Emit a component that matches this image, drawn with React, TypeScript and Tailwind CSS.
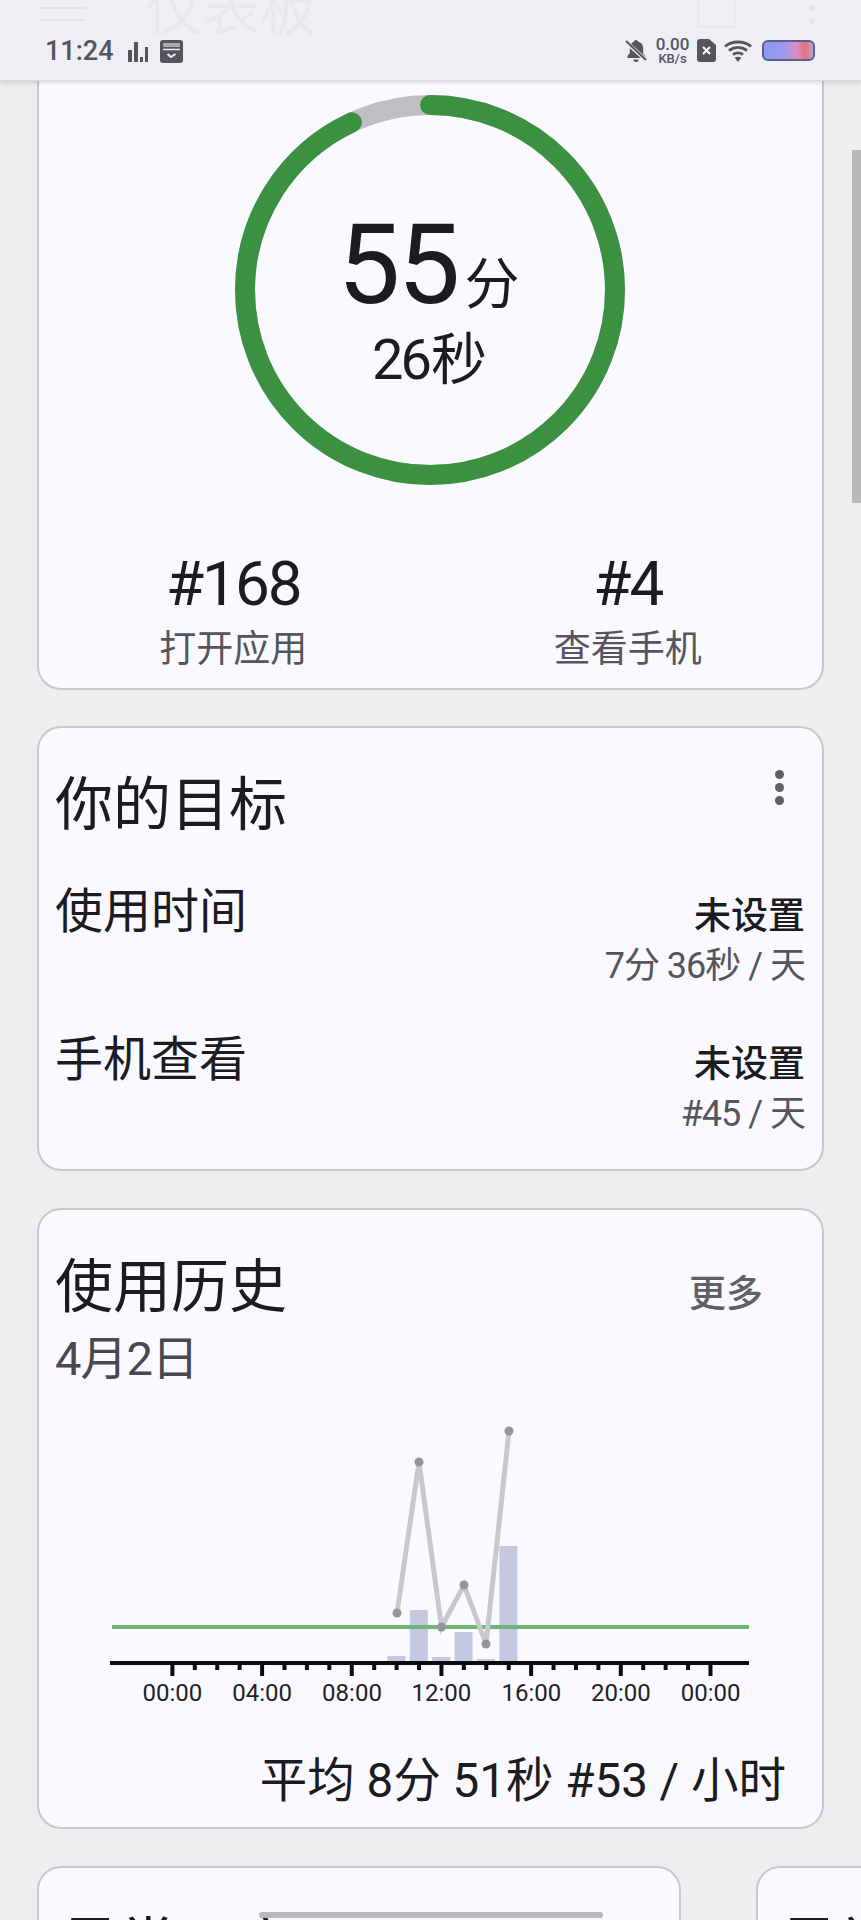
const sans = "font-['Roboto','Noto_Sans_CJK_SC',sans-serif]"

const hours = [172.4, 262.2, 352, 441.4, 531.4, 620.8, 710.6]
const labels = ['00:00', '04:00', '08:00', '12:00', '16:00', '20:00', '00:00']
const bars = [
    { h: 10, top: 1657 },
    { h: 11, top: 1611 },
    { h: 12, top: 1658 },
    { h: 13, top: 1633 },
    { h: 14, top: 1660 },
    { h: 15, top: 1547 },
]
const points = [
    [397, 1614],
    [419, 1463],
    [441.5, 1628],
    [464, 1586],
    [486, 1645],
    [509, 1432],
]

function StatusIcons()
{
    return (
        <div className="flex items-center">
            <svg width="22" height="24" viewBox="0 0 22 24" className="ml-[625px] text-[#55555e]" fill="currentColor">
                <path d="M11 1a2 2 0 0 1 2 1.600c3.400.8 5.200 3.600 5.200 7v5l2.300 3v1.400H2.500V17l2.300-3V9.600c0-3.400 2.200-6.200 4.200-7A2 2 0 0 1 11 1zM8.500 20.500h5a2.500 2.500 0 0 1-5 0z" />
                <path d="M1 3l20 18" stroke="#eeeef4" strokeWidth="4" />
                <path d="M1 2l20 19" stroke="currentColor" strokeWidth="2" />
            </svg>
            <div className={`ml-[7px] flex w-[37px] flex-col items-center font-medium text-[#55555e] ${sans}`}>
                <span className="text-[17px] leading-[16px]">0.00</span>
                <span className="text-[13px] leading-[13px]">KB/s</span>
            </div>
            <svg width="19" height="23" viewBox="0 0 19 23" className="ml-[6px]">
                <path d="M3 0h9l7 6v14a3 3 0 0 1-3 3H3a3 3 0 0 1-3-3V3a3 3 0 0 1 3-3z" fill="#55555e" />
                <path d="M6 8l7 7M13 8l-7 7" stroke="#ffffff" strokeWidth="2" />
            </svg>
            <svg width="28" height="22" viewBox="0 0 28 22" className="ml-[8px]" fill="none" stroke="#55555e" strokeWidth="2.800">
                <path d="M1 6.500C8 .5 20 .5 27 6.500" />
                <path d="M5 10.500c5.500-4 12.500-4 18 0" />
                <path d="M9 14.500c3-2 7-2 10 0" />
                <path d="M14 22l-3.500-4.500c2-1 5-1 7 0z" fill="#55555e" stroke="none" />
            </svg>
            <div className="ml-[10px] h-[21px] w-[53px] overflow-hidden rounded-[6px] border-2 border-[#56608a] bg-[linear-gradient(90deg,#8f97f0_0%,#a097ee_40%,#d68fc4_65%,#e56f7f_85%,#b9a6d8_100%)]" />
        </div>
    )
}

function Header()
{
    return (
        <header className="relative h-[81px] shrink-0 overflow-hidden bg-[#eeeef4] border-b border-[#dcdce0] shadow-[0_2px_4px_rgba(0,0,0,0.12)] z-10">
            <div className="flex h-[36px] items-start text-[#e7e7ed]">
                <div className="ml-[40px] mt-[7px] flex w-[46px] flex-col gap-[10px]">
                    <div className="h-[2px] bg-[#e3e3e9]" />
                    <div className="h-[2px] bg-[#e3e3e9]" />
                </div>
                <div className={`ml-[60px] -mt-[24px] text-[57px] leading-[70px] ${sans}`}>仪表板</div>
                <div className="ml-[380px] -mt-[2px] h-[30px] w-[39px] rounded-[2px] border-2 border-[#e7e7ed]" />
                <div className="ml-[73px] mt-[5px] flex flex-col gap-[7px]">
                    <div className="h-[6px] w-[6px] rounded-full bg-[#e3e3e9]" />
                    <div className="h-[6px] w-[6px] rounded-full bg-[#e3e3e9]" />
                </div>
            </div>
            <div className="flex h-[30px] items-center pl-[45px] text-[#55555e]">
                <span className={`text-[27px] font-medium leading-[30px] ${sans}`}>11:24</span>
                <svg width="21" height="21" viewBox="0 0 21 21" fill="currentColor" className="ml-[14px]">
                    <rect x="0" y="9" width="4" height="12" />
                    <rect x="6" y="1" width="4" height="20" />
                    <rect x="12" y="16" width="3" height="5" />
                    <rect x="17" y="6" width="3" height="15" />
                </svg>
                <svg width="23" height="23" viewBox="0 0 23 23" className="ml-[11px]">
                    <rect width="23" height="23" rx="3" fill="#55555e" />
                    <rect x="3" y="3" width="17" height="4" rx="1" fill="#a9a9b0" />
                    <path d="M3 9.500h17" stroke="#eeeef4" strokeWidth="1.500" />
                    <path d="M7.500 14l3.500 3 4.500-3" stroke="#eeeef4" strokeWidth="2" fill="none" />
                </svg>
                <div className="absolute left-0 top-[36px]">
                    <StatusIcons />
                </div>
            </div>
        </header>
    )
}

function Ring()
{
    return (
        <div className="relative -ml-[2px] mt-[14px] h-[390px] w-[390px]">
            <svg width="390" height="390" viewBox="0 0 390 390" className="absolute inset-0">
                <circle cx="195" cy="195" r="185" fill="none" stroke="#bfbfc3" strokeWidth="20" />
                <circle
                    cx="195"
                    cy="195"
                    r="185"
                    fill="none"
                    stroke="#3c9140"
                    strokeWidth="20"
                    strokeLinecap="round"
                    pathLength="360"
                    strokeDasharray="335 360"
                    transform="rotate(-90 195 195)"
                />
            </svg>
            <div className={`absolute inset-0 flex flex-col items-center pt-[110px] text-[#1b1b21] ${sans}`}>
                <div className="flex items-baseline pr-[2px]">
                    <span className="text-[112px] leading-[120px] tracking-[-3px]">55</span>
                    <span className="ml-[7px] text-[55px] leading-[60px]">分</span>
                </div>
                <div className="mt-[3px] flex items-baseline text-[56px] leading-[64px]">
                    <span className="tracking-[-3px]">26</span>
                    <span className="ml-[2px]">秒</span>
                </div>
            </div>
        </div>
    )
}

function Stat({ value, label, className }: { value: string; label: string; className?: string })
{
    return (
        <div className={`flex flex-1 flex-col items-center ${sans} ${className ?? ''}`}>
            <span className="text-[62px] leading-[66px] tracking-[-2px] text-[#1b1b21]">{value}</span>
            <span className="mt-[9px] text-[37px] leading-[48px] text-[#55555e]">{label}</span>
        </div>
    )
}

function GoalRow({ name, target }: { name: string; target: string })
{
    return (
        <div className={`flex items-start justify-between ${sans}`}>
            <span className="text-[48px] leading-[62px] text-[#1b1b21]">{name}</span>
            <div className="flex flex-col items-end pt-[13px]">
                <span className="text-[37px] font-medium leading-[46px] text-[#1b1b21]">未设置</span>
                <span className="text-[36px] leading-[52px] tracking-[-1px] text-[#55555e]">{target}</span>
            </div>
        </div>
    )
}

function UsageChart()
{
    // 坐标沿用整页的 y,减去图表顶部
    const y0 = 1400
    return (
        <svg width="783" height="320" viewBox="39 1400 783 320" className="block">
            {bars.map((b) => {
                const x = 172.4 + b.h * 22.4
                return <rect key={b.h} x={x - 9} y={b.top} width="18" height={1664 - b.top} fill="#c5c8e1" />
            })}
            <line x1="112" y1="1628" x2="749" y2="1628" stroke="#6fb573" strokeWidth="4" />
            <polyline
                points={points.map((p) => p.join(',')).join(' ')}
                fill="none"
                stroke="#c9c9cd"
                strokeWidth="5"
            />
            {points.map((p) => (
                <circle key={p[0]} cx={p[0]} cy={p[1]} r="4.5" fill="#95959c" />
            ))}
            <rect x="110" y="1662" width="639" height="4" fill="#0c0c0e" />
            {Array.from({ length: 25 }).map((_, i) => {
                const x = 172.4 + i * 22.42
                return (
                    <rect
                        key={i}
                        x={x - 2}
                        y="1664"
                        width="4"
                        height={i % 4 === 0 ? 13 : 7}
                        fill="#0c0c0e"
                    />
                )
            })}
            {labels.map((t, i) => (
                <text
                    key={i}
                    x={hours[i]}
                    y={y0 + 302}
                    textAnchor="middle"
                    fontSize="24"
                    fill="#222226"
                    fontFamily="Roboto, sans-serif"
                >
                    {t}
                </text>
            ))}
        </svg>
    )
}

export default function App()
{
    return (
        <div className={`relative flex h-[1920px] w-[861px] flex-col overflow-hidden bg-[#eeeeee] ${sans}`}>
            <Header />
            <main className="flex flex-col px-[37px]">
                <section className="flex h-[609px] flex-col items-center rounded-b-[24px] border-2 border-t-0 border-[#c8c8cd] bg-[#f9f9ff]">
                    <Ring />
                    <div className="mt-[66px] flex w-full px-[2px]">
                        <Stat value="#168" label="打开应用" className="pr-[10px]" />
                        <Stat value="#4" label="查看手机" />
                    </div>
                </section>

                <section className="mt-[36px] flex h-[445px] flex-col rounded-[24px] border-2 border-[#c8c8cd] bg-[#f9f9ff] pl-[16px] pr-[17px]">
                    <div className="flex items-start justify-between pt-[39px]">
                        <h2 className="text-[58px] leading-[76px] text-[#1b1b21]">你的目标</h2>
                        <div className="mr-[21px] mt-[3px] flex flex-col gap-[4px]">
                            <div className="h-[9px] w-[9px] rounded-full bg-[#5f6068]" />
                            <div className="h-[9px] w-[9px] rounded-full bg-[#5f6068]" />
                            <div className="h-[9px] w-[9px] rounded-full bg-[#5f6068]" />
                        </div>
                    </div>
                    <div className="mt-[38px]">
                        <GoalRow name="使用时间" target="7分 36秒 / 天" />
                    </div>
                    <div className="mt-[37px]">
                        <GoalRow name="手机查看" target="#45 / 天" />
                    </div>
                </section>

                <section className="mt-[37px] flex h-[621px] flex-col rounded-[24px] border-2 border-[#c8c8cd] bg-[#f9f9ff]">
                    <div className="flex items-start justify-between pl-[16px] pr-[59px] pt-[39px]">
                        <div className="flex flex-col">
                            <h2 className="text-[58px] leading-[76px] text-[#1b1b21]">使用历史</h2>
                            <span className="mt-[8px] text-[47px] leading-[52px] tracking-[-1px] text-[#48484f]">4月2日</span>
                        </div>
                        <span className="mt-[22px] text-[37px] font-medium leading-[48px] text-[#5f5f66]">更多</span>
                    </div>
                    <div className="mt-[14px]">
                        <UsageChart />
                    </div>
                    <div className="mt-[34px] pr-[36px] text-right text-[47.500px] leading-[56px] text-[#1b1b21]">
                        平均 8分 51秒 #53 / 小时
                    </div>
                </section>

                <div className="mt-[37px] flex gap-[75px]">
                    <section className="h-[120px] w-[644px] shrink-0 rounded-t-[24px] border-2 border-[#c8c8cd] bg-[#f9f9ff] pl-[22px] pt-[39px]">
                        <h2 className="text-[58px] leading-[76px] text-[#1b1b21]">最常用应用</h2>
                    </section>
                    <section className="h-[120px] w-[300px] shrink-0 rounded-t-[24px] border-2 border-[#c8c8cd] bg-[#f9f9ff] pl-[22px] pt-[39px]">
                        <h2 className="text-[58px] leading-[76px] text-[#1b1b21]">最常</h2>
                    </section>
                </div>
            </main>

            <div className="absolute right-0 top-[150px] h-[353px] w-[9px] bg-[#b9b9bc]" />
            <div className="absolute left-[259px] top-[1912px] h-[6px] w-[344px] rounded-full bg-[#b9b9bc]" />
        </div>
    )
}
